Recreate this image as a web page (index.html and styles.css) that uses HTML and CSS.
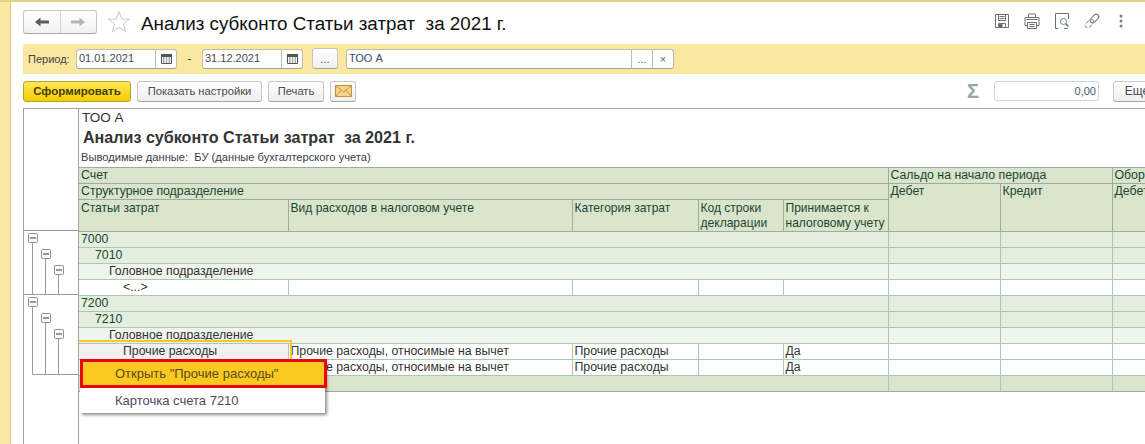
FILE: index.html
```html
<!DOCTYPE html>
<html lang="ru">
<head>
<meta charset="utf-8">
<title>Анализ субконто</title>
<link rel="stylesheet" href="styles.css">
</head>
<body>
<div class="app">
  <div class="strip"></div>
  <main class="main">
    <header class="titlebar">
      <div class="nav">
        <button class="nav-btn"><svg width="16" height="12" viewBox="0 0 16 12"><path d="M1 6 6.5 1.5V4.5H15V7.5H6.5V10.500Z" fill="#5c5c5c"/></svg></button>
        <button class="nav-btn nav-btn-off"><svg width="16" height="12" viewBox="0 0 16 12"><path d="M15 6 9.500 1.500V4.500H1V7.500H9.500V10.500Z" fill="#b4b4b4"/></svg></button>
      </div>
      <svg class="star" width="24" height="24" viewBox="0 0 24 24"><path d="M12 1.500 14.800 9.100H22.800L16.400 14 18.800 22 12 17.300 5.200 22 7.600 14 1.200 9.100H9.200Z" fill="#fff" stroke="#c9c9c9"/></svg>
      <h1 class="title">Анализ субконто Статьи затрат&nbsp; за 2021 г.</h1>
      <div class="tools">
        <svg width="16" height="16" viewBox="0 0 16 16" fill="none" stroke="#707070"><path d="M1.500 1.500H14.500V14.500H1.500Z"/><path d="M4.500 1.500V7.500H11.500V1.500M5.500 3.500H10.500M5.500 5.500H10.500"/><path d="M4.500 14.500V10.500H11.500V14.500"/><path d="M5 11H8V14H5Z" fill="#606060"/></svg>
        <svg width="16" height="16" viewBox="0 0 16 16" fill="none" stroke="#707070"><path d="M4.500 4.500V1H11.500V4.500"/><path d="M3.500 12.500H1V4.500H15V12.500H12.500"/><path d="M3.500 9.500H12.500V15.500H3.500Z"/><path d="M5.500 11.500H10.500M5.500 13.500H10.500M2.500 6.500H13.500"/></svg>
        <svg width="16" height="16" viewBox="0 0 16 16" fill="none" stroke="#707070"><path d="M4 15.500H1.500V.5H14.500V6M10 15.500H14"/><circle cx="9.500" cy="8.500" r="3" stroke="#5a8a9a"/><path d="M11.700 10.700 14.500 13.500" stroke-width="1.500"/></svg>
        <svg width="16" height="16" viewBox="0 0 16 16" fill="none"><rect x="8" y="0.500" width="5" height="10" rx="2.500" transform="rotate(45 10.500 5.500)" stroke="#666"/><rect x="3" y="5.500" width="5" height="10" rx="2.500" transform="rotate(45 5.500 10.500)" stroke="#999" stroke-dasharray="4 1.500"/></svg>
        <svg class="tool-more" width="4" height="14" viewBox="0 0 4 14" fill="#7c7c7c"><circle cx="2" cy="2" r="1.500"/><circle cx="2" cy="7" r="1.500"/><circle cx="2" cy="12" r="1.500"/></svg>
      </div>
    </header>

    <section class="period">
      <span class="period-label">Период:</span>
      <div class="field field-date"><span class="field-text">01.01.2021</span><span class="field-btn"><svg width="11" height="11" viewBox="0 0 11 11"><path d="M.5 1.500H10.500V10.500H.5Z" fill="#fff" stroke="#555"/><path d="M.5 1.500H10.500V3.500H.5Z" fill="#555" stroke="#555"/><path d="M2 5H3.500M4.800 5H6.300M7.600 5H9.100M2 7H3.500M4.800 7H6.300M7.600 7H9.100M2 9H3.500M4.800 9H6.300M7.600 9H9.100" stroke="#555"/></svg></span></div>
      <span class="dash">-</span>
      <div class="field field-date"><span class="field-text">31.12.2021</span><span class="field-btn"><svg width="11" height="11" viewBox="0 0 11 11"><path d="M.5 1.500H10.500V10.500H.5Z" fill="#fff" stroke="#555"/><path d="M.5 1.500H10.500V3.500H.5Z" fill="#555" stroke="#555"/><path d="M2 5H3.500M4.800 5H6.300M7.600 5H9.100M2 7H3.500M4.800 7H6.300M7.600 7H9.100M2 9H3.500M4.800 9H6.300M7.600 9H9.100" stroke="#555"/></svg></span></div>
      <button class="btn btn-dots">...</button>
      <div class="field field-org"><span class="field-text org-text">ТОО А</span><span class="field-btn field-btn-s">...</span><span class="field-btn field-btn-s">×</span></div>
    </section>

    <section class="actions">
      <button class="btn btn-primary">Сформировать</button>
      <button class="btn btn-settings">Показать настройки</button>
      <button class="btn btn-print">Печать</button>
      <button class="btn btn-mail"><svg width="17" height="12" viewBox="0 0 17 12"><path d="M.5.5H16.500V11.500H.5Z" fill="#f6d68f" stroke="#c98f3a"/><path d="M.5.5 8.500 7 16.500.5M.5 11.500 6 5.500M16.500 11.500 11 5.500" fill="none" stroke="#c98f3a"/></svg></button>
      <span class="sigma">Σ</span>
      <div class="sum">0,00</div>
      <button class="btn btn-more">Еще</button>
    </section>

    <section class="report">
      <aside class="gutter">
        <svg class="tree" width="54" height="335" viewBox="24 109 54 335" fill="none" stroke="#9b9b9b">
          <path d="M24 230.500H78M24 294.500H78"/>
          <path d="M32.500 243V294.500M45.500 259V294.500M58.500 275V294.500"/>
          <path d="M32.500 307V374.500H78M45.500 323V374.500M58.500 339V374.500"/>
          <g fill="#fdfdfd" stroke="#8f8f8f">
            <rect x="28.500" y="233.500" width="9" height="9" rx="1"/>
            <rect x="41.500" y="249.500" width="9" height="9" rx="1"/>
            <rect x="54.500" y="265.500" width="9" height="9" rx="1"/>
            <rect x="28.500" y="297.500" width="9" height="9" rx="1"/>
            <rect x="41.500" y="313.500" width="9" height="9" rx="1"/>
            <rect x="54.500" y="329.500" width="9" height="9" rx="1"/>
          </g>
          <path stroke="#333" d="M30 238H36M43 254H49M56 270H62M30 302H36M43 318H49M56 334H62"/>
        </svg>
      </aside>
      <div class="sheet">
        <div class="report-head">
          <div class="org">ТОО А</div>
          <div class="report-title">Анализ субконто Статьи затрат&nbsp; за 2021 г.</div>
          <div class="report-note">Выводимые данные:&nbsp; БУ (данные бухгалтерского учета)</div>
        </div>
        <table class="grid">
          <colgroup>
            <col class="c1"><col class="c2"><col class="c3"><col class="c4"><col class="c5"><col class="c6"><col class="c7"><col class="c8"><col class="c9">
          </colgroup>
          <thead>
            <tr><th colspan="5">Счет</th><th colspan="2">Сальдо на начало периода</th><th colspan="2">Обороты за период</th></tr>
            <tr><th colspan="5">Структурное подразделение</th><th rowspan="2">Дебет</th><th rowspan="2">Кредит</th><th rowspan="2">Дебет</th><th rowspan="2">Кредит</th></tr>
            <tr class="tall"><th>Статьи затрат</th><th>Вид расходов в налоговом учете</th><th>Категория затрат</th><th>Код строки декларации</th><th>Принимается к налоговому учету</th></tr>
          </thead>
          <tbody>
            <tr class="lvl1"><td colspan="5">7000</td><td></td><td></td><td></td><td></td></tr>
            <tr class="lvl1"><td colspan="5" class="in1">7010</td><td></td><td></td><td></td><td></td></tr>
            <tr class="lvl2"><td colspan="5" class="in2">Головное подразделение</td><td></td><td></td><td></td><td></td></tr>
            <tr><td class="in3">&lt;...&gt;</td><td></td><td></td><td></td><td></td><td></td><td></td><td></td><td></td></tr>
            <tr class="lvl1"><td colspan="5">7200</td><td></td><td></td><td></td><td></td></tr>
            <tr class="lvl1"><td colspan="5" class="in1">7210</td><td></td><td></td><td></td><td></td></tr>
            <tr class="lvl2"><td colspan="5" class="in2">Головное подразделение</td><td></td><td></td><td></td><td></td></tr>
            <tr><td class="in3 selected">Прочие расходы</td><td>Прочие расходы, относимые на вычет</td><td>Прочие расходы</td><td></td><td>Да</td><td></td><td></td><td></td><td></td></tr>
            <tr><td class="in3">Прочие расходы</td><td>Прочие расходы, относимые на вычет</td><td>Прочие расходы</td><td></td><td>Да</td><td></td><td></td><td></td><td></td></tr>
            <tr class="total"><td colspan="5"></td><td></td><td></td><td></td><td></td></tr>
          </tbody>
        </table>
        <div class="cell-outline"></div>
        <div class="menu">
          <div class="menu-item menu-item-active">Открыть "Прочие расходы"</div>
          <div class="menu-item">Карточка счета 7210</div>
        </div>
      </div>
    </section>
  </main>
</div>
</body>
</html>
```
FILE: styles.css
```css
* { box-sizing: border-box; }
html, body { margin: 0; height: 444px; overflow: hidden; background: #fff; }
body { font-family: "Liberation Sans", Arial, sans-serif; font-size: 12px; color: #333; }
button { font-family: inherit; padding: 0; margin: 0; }

.app { display: flex; height: 444px; width: 1145px; border-top: 2px solid #e3d27e; }
.strip { width: 11px; flex: none; background: #fbe9a3; border-right: 1px solid #dccb72; }
.main { flex: 1; min-width: 0; padding-left: 12px; display: flex; flex-direction: column; overflow: hidden; }

.titlebar { height: 42px; display: flex; align-items: flex-start; padding-top: 8px; flex: none; }
.nav { display: flex; width: 74px; height: 24px; border: 1px solid #c4c4c4; border-bottom-color: #a8a8a8; border-radius: 3px; background: linear-gradient(#fff, #f1f1f1); }
.nav-btn { flex: 1; border: 0; background: none; display: flex; align-items: center; justify-content: center; }
.nav-btn-off { border-left: 1px solid #d2d2d2; }
.star { margin-left: 10px; flex: none; }
.title { margin: 3px 0 0 10px; font-size: 18.800px; line-height: 22px; font-weight: 400; color: #111; white-space: nowrap; }
.tools { margin-left: auto; margin-right: 22px; margin-top: 3px; display: flex; align-items: center; gap: 14px; height: 16px; }
.tool-more { margin-left: 5px; }

.period { height: 30px; flex: none; background: #fbe8a0; display: flex; align-items: center; padding-left: 5px; padding-bottom: 1px; }
.period-label { width: 48px; color: #444; font-size: 11px; }
.field { height: 20px; background: #fff; border: 1px solid #bcbcbc; border-bottom-color: #a0a0a0; border-radius: 3px; display: flex; align-items: stretch; }
.field-date { width: 101px; }
.field-text { flex: 1; padding-left: 2px; font-size: 11px; line-height: 17px; color: #4a4a4a; }
.field-btn { width: 21px; border-left: 1px solid #bcbcbc; display: flex; align-items: center; justify-content: center; color: #666; }
.field-btn-s { width: 21px; font-size: 11px; }
.dash { width: 25px; text-align: center; color: #444; }
.btn { height: 21px; border: 1px solid #c6c6c6; border-bottom-color: #a4a4a4; border-radius: 3px; background: linear-gradient(#fff, #efefef); color: #4a4a4a; font-size: 11.200px; white-space: nowrap; flex: none; }
.btn-dots { width: 26px; margin-left: 9px; }
.field-org { width: 328px; margin-left: 8px; }
.org-text { color: #3b4a6a; }

.actions { height: 34px; flex: none; display: flex; align-items: center; }
.btn-primary { width: 108px; background: linear-gradient(#ffe75a, #f3cc05); border-color: #b9a22a; color: #4a3d00; font-weight: 700; font-size: 11.500px; }
.btn-settings { width: 125px; margin-left: 6px; }
.btn-print { width: 56px; margin-left: 6px; }
.btn-mail { width: 26px; margin-left: 6px; display: flex; align-items: center; justify-content: center; }
.sigma { margin-left: auto; width: 27px; font-size: 20px; line-height: 20px; font-weight: 700; color: #98a4ab; flex: none; }
.sum { width: 105px; height: 20px; border: 1px solid #d4d4d4; border-radius: 3px; text-align: right; padding-right: 2px; font-size: 11px; line-height: 18px; color: #4a5a70; flex: none; }
.btn-more { width: 48px; margin-left: 14px; margin-right: -16px; font-size: 12px; }

.report { flex: 1; min-height: 0; display: flex; border-top: 1px solid #a3a3a3; border-left: 1px solid #a3a3a3; overflow: hidden; }
.gutter { width: 54px; flex: none; }
.tree { display: block; }
.sheet { position: relative; flex: 1; min-width: 0; border-left: 1px solid #a3a3a3; }
.report-head { height: 58px; padding-left: 3px; overflow: hidden; }
.org { height: 17px; font-size: 13.500px; line-height: 17px; color: #333; }
.report-title { height: 22px; padding-left: 1px; font-size: 16.100px; line-height: 22px; font-weight: 700; color: #333; white-space: nowrap; }
.report-note { font-size: 11.150px; line-height: 16px; padding-top: 1px; margin-left: -1px; color: #3b3b4b; white-space: nowrap; }

.grid { table-layout: fixed; border-collapse: collapse; width: 1176px; }
.c1 { width: 209px; } .c2 { width: 284px; } .c3 { width: 126px; } .c4 { width: 85px; } .c5 { width: 105px; }
.c6 { width: 112px; } .c7 { width: 112px; } .c8 { width: 112px; } .c9 { width: 112px; }
.grid th, .grid td { padding: 1px 2px 0; font-size: 12.300px; line-height: 13px; height: 16px; text-align: left; vertical-align: top; white-space: nowrap; overflow: hidden; font-weight: 400; }
.grid th { background: #d9e5cb; border: 1px solid #a3a8a0; color: #1e4436; }
.grid th:first-child { border-left: 0; }
.grid tr.tall th { height: 31px; line-height: 15px; font-size: 12.050px; padding-right: 0; white-space: normal; }
.grid td { border: 1px solid #a9c8bc; background: #fff; }
.grid td:first-child { border-left: 0; }
.grid .lvl1 td { background: #e4eedd; color: #1e4436; }
.grid .lvl2 td { background: #eff4ec; }
.grid .total td { background: #d9e5cb; border-top-color: #a3a8a0; border-bottom-color: #a3a8a0; }
.grid .total td + td { border-left-color: #a3a8a0; }
.in1 { padding-left: 16px !important; }
.in2 { padding-left: 30px !important; }
.in3 { padding-left: 44px !important; }
.grid td.selected { background: #f0f0f0; }

.cell-outline { position: absolute; left: 0; top: 231px; width: 213px; height: 20px; border-top: 2px solid #fbc628; border-right: 2px solid #fbc628; }
.menu { position: absolute; left: 1px; top: 250px; width: 245px; height: 54px; background: #fff; box-shadow: 2px 2px 3px rgba(0, 0, 0, .45); }
.menu-item { height: 25px; line-height: 25px; padding-left: 35px; font-size: 13px; color: #4b4b5e; }
.menu-item-active { height: 29px; width: 247px; background: #fbc91f; border: 3px solid #e8060f; padding-left: 32px; line-height: 23px; color: #5a4a20; }
```
